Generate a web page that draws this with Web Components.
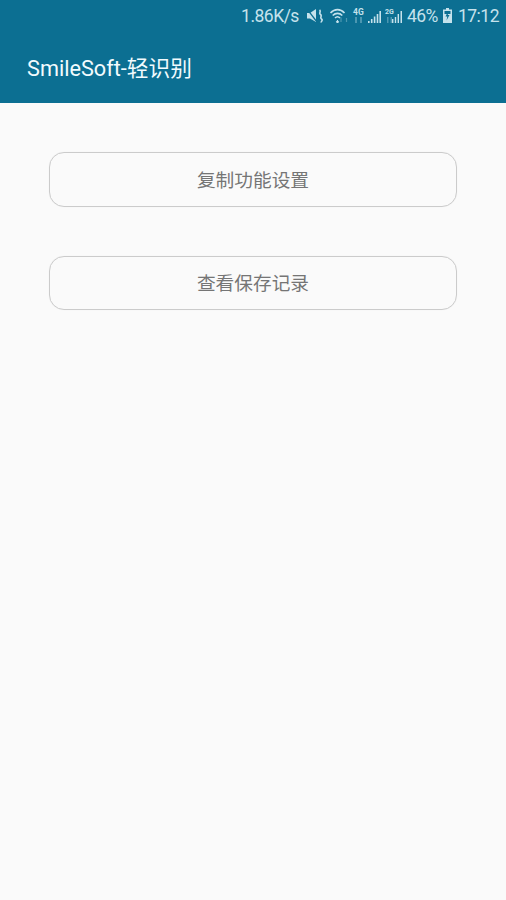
<!DOCTYPE html>
<html lang="zh">
<head>
<meta charset="utf-8">
<title>SmileSoft-轻识别</title>
<style>
  html, body { margin: 0; height: 100%; }
  body { background: #fafafa; font-family: Roboto, "Noto Sans CJK SC", sans-serif; }
</style>
</head>
<body>
<app-screen>
  <status-bar></status-bar>
  <app-bar>SmileSoft-轻识别</app-bar>
  <main-menu>
    <menu-button>复制功能设置</menu-button>
    <menu-button>查看保存记录</menu-button>
  </main-menu>
</app-screen>

<script>
// Page column
class AppScreen extends HTMLElement {
    constructor() {
        super();
        const root = this.attachShadow({mode: 'open'});
        root.innerHTML = `
            <style>
                :host {
                    display: flex;
                    flex-direction: column;
                    width: 506px;
                    height: 900px;
                    overflow: hidden;
                    background: #fafafa;
                }
            </style>
            <slot></slot>
        `;
    }
}

// Android status bar
class StatusBar extends HTMLElement {
    constructor() {
        super();
        const root = this.attachShadow({mode: 'open'});
        root.innerHTML = `
            <style>
                :host {
                    display: flex;
                    align-items: center;
                    justify-content: flex-end;
                    height: 31px;
                    padding: 0 7px 0 0;
                    box-sizing: border-box;
                    background: #0c6f92;
                    color: #c5e2ec;
                    font: 17.5px Roboto, sans-serif;
                    letter-spacing: -0.5px;
                }
                svg { display: block; flex: none; }
                .mute { margin: 0 7px 0 8px; }
                .wifi { margin-right: 4px; }
                .net { display: flex; align-items: flex-end; height: 16px; margin-top: -1px; }
                .sig { display: flex; flex-direction: column; align-items: center; gap: 1px; width: 11px; }
                .sig span { font: bold 8.5px/7px Roboto, sans-serif; letter-spacing: 0; white-space: nowrap; }
                .two { margin-left: 5px; }
                .two .sig { width: 7px; }
                .two .sig span { font-size: 7px; }
                .pct { margin: 0 5px 0 5px; }
                .batt { margin-right: 6px; }
            </style>
            <span>1.86K/s</span>
            <svg class="mute" width="16" height="14" viewBox="0 0 16 14" fill="#c5e2ec">
                <path d="M0 4h3l6-4v13L3 9.500H0z"/>
                <path d="M0 0l10 13" stroke="#0c6f92" stroke-width="1.300"/>
                <path d="M12.500 1c2 1.500-1 3 1 4.500s-1 3 1 4.500-1 2 0 3.500" fill="none" stroke="#c5e2ec" stroke-width="1.600"/>
            </svg>
            <svg class="wifi" width="19" height="15" viewBox="0 0 19 15" fill="none" stroke="#c5e2ec" stroke-width="1.600">
                <path d="M0.500 5c4-4.500 10-4.500 14 0"/>
                <path d="M2.700 7.500c2.800-2.900 6.800-2.900 9.600 0"/>
                <path d="M5 10c1.500-1.500 3.500-1.500 5 0"/>
                <path d="M7.500 15v-3M6.200 13.400l1.300 1.400 1.300-1.400" stroke-width="1.200"/>
                <path d="M11 9.500v4.500M16.500 10v4" stroke-opacity=".35" stroke-width="1.200"/>
            </svg>
            <div class="net">
                <div class="sig">
                    <span>4G</span>
                    <svg width="11" height="6" viewBox="0 0 11 6" fill="#c5e2ec" fill-opacity=".35">
                        <path d="M2 0h2v6H2zM7 0h2v6H7z"/>
                    </svg>
                </div>
                <svg style="margin-left:4px" width="13" height="12" viewBox="0 0 13 12" fill="#c5e2ec">
                    <path d="M0 10h1.600v2H0zM2.900 8h1.600v4H2.900zM5.800 5.500h1.600V12H5.800zM8.700 3h1.600v9H8.700zM11.400 0H13v12h-1.600z"/>
                </svg>
            </div>
            <div class="net two">
                <div class="sig">
                    <span>2G</span>
                    <svg width="7" height="6" viewBox="0 0 7 6" fill="#c5e2ec" fill-opacity=".35">
                        <path d="M1 0h1.500v6H1zM4.500 0H6v6H4.500z"/>
                    </svg>
                </div>
                <svg style="margin-left:-1px" width="10" height="12" viewBox="0 0 10 12" fill="#c5e2ec">
                    <path d="M0 8h1.400v4H0zM2.800 6h1.400v6H2.800zM5.600 3h1.400v9H5.600zM8.500 0H10v12H8.500z"/>
                </svg>
            </div>
            <span class="pct">46%</span>
            <svg class="batt" width="9" height="15" viewBox="0 0 9 15">
                <path d="M3 0h3v1.500h3V15H0V1.500h3z" fill="#c5e2ec"/>
                <path d="M1.500 3h6v3h-6z" fill="#0c6f92"/>
                <path d="M5 3.500L2.500 8.500h1.800L3.500 12.500 6.500 7H4.800z" fill="#0c6f92"/>
            </svg>
            <span>17:12</span>
        `;
    }
}

// Title bar under the status bar
class AppBar extends HTMLElement {
    constructor() {
        super();
        const root = this.attachShadow({mode: 'open'});
        root.innerHTML = `
            <style>
                :host {
                    display: flex;
                    align-items: center;
                    height: 72px;
                    padding: 0 0 2px 27px;
                    box-sizing: border-box;
                    background: #0c6f92;
                    color: #f2fbfe;
                    font: 21.7px Roboto, "Noto Sans CJK SC", sans-serif;
                }
            </style>
            <slot></slot>
        `;
    }
}

// Column of outlined buttons
class MainMenu extends HTMLElement {
    constructor() {
        super();
        const root = this.attachShadow({mode: 'open'});
        root.innerHTML = `
            <style>
                :host {
                    display: flex;
                    flex-direction: column;
                    gap: 49px;
                    padding: 49px 49px 0;
                }
            </style>
            <slot></slot>
        `;
    }
}

class MenuButton extends HTMLElement {
    constructor() {
        super();
        const root = this.attachShadow({mode: 'open'});
        root.innerHTML = `
            <style>
                :host {
                    display: flex;
                    align-items: center;
                    justify-content: center;
                    height: 54.5px;
                    padding-bottom: 2px;
                    box-sizing: border-box;
                    border: 1px solid #cbcbcb;
                    border-radius: 15px;
                    box-shadow: 0 0 1px rgba(0,0,0,0.08);
                    color: #757575;
                    font: 18.7px "Noto Sans CJK SC", sans-serif;
                }
            </style>
            <slot></slot>
        `;
    }
}

customElements.define('app-screen', AppScreen);
customElements.define('status-bar', StatusBar);
customElements.define('app-bar', AppBar);
customElements.define('main-menu', MainMenu);
customElements.define('menu-button', MenuButton);
</script>
</body>
</html>
